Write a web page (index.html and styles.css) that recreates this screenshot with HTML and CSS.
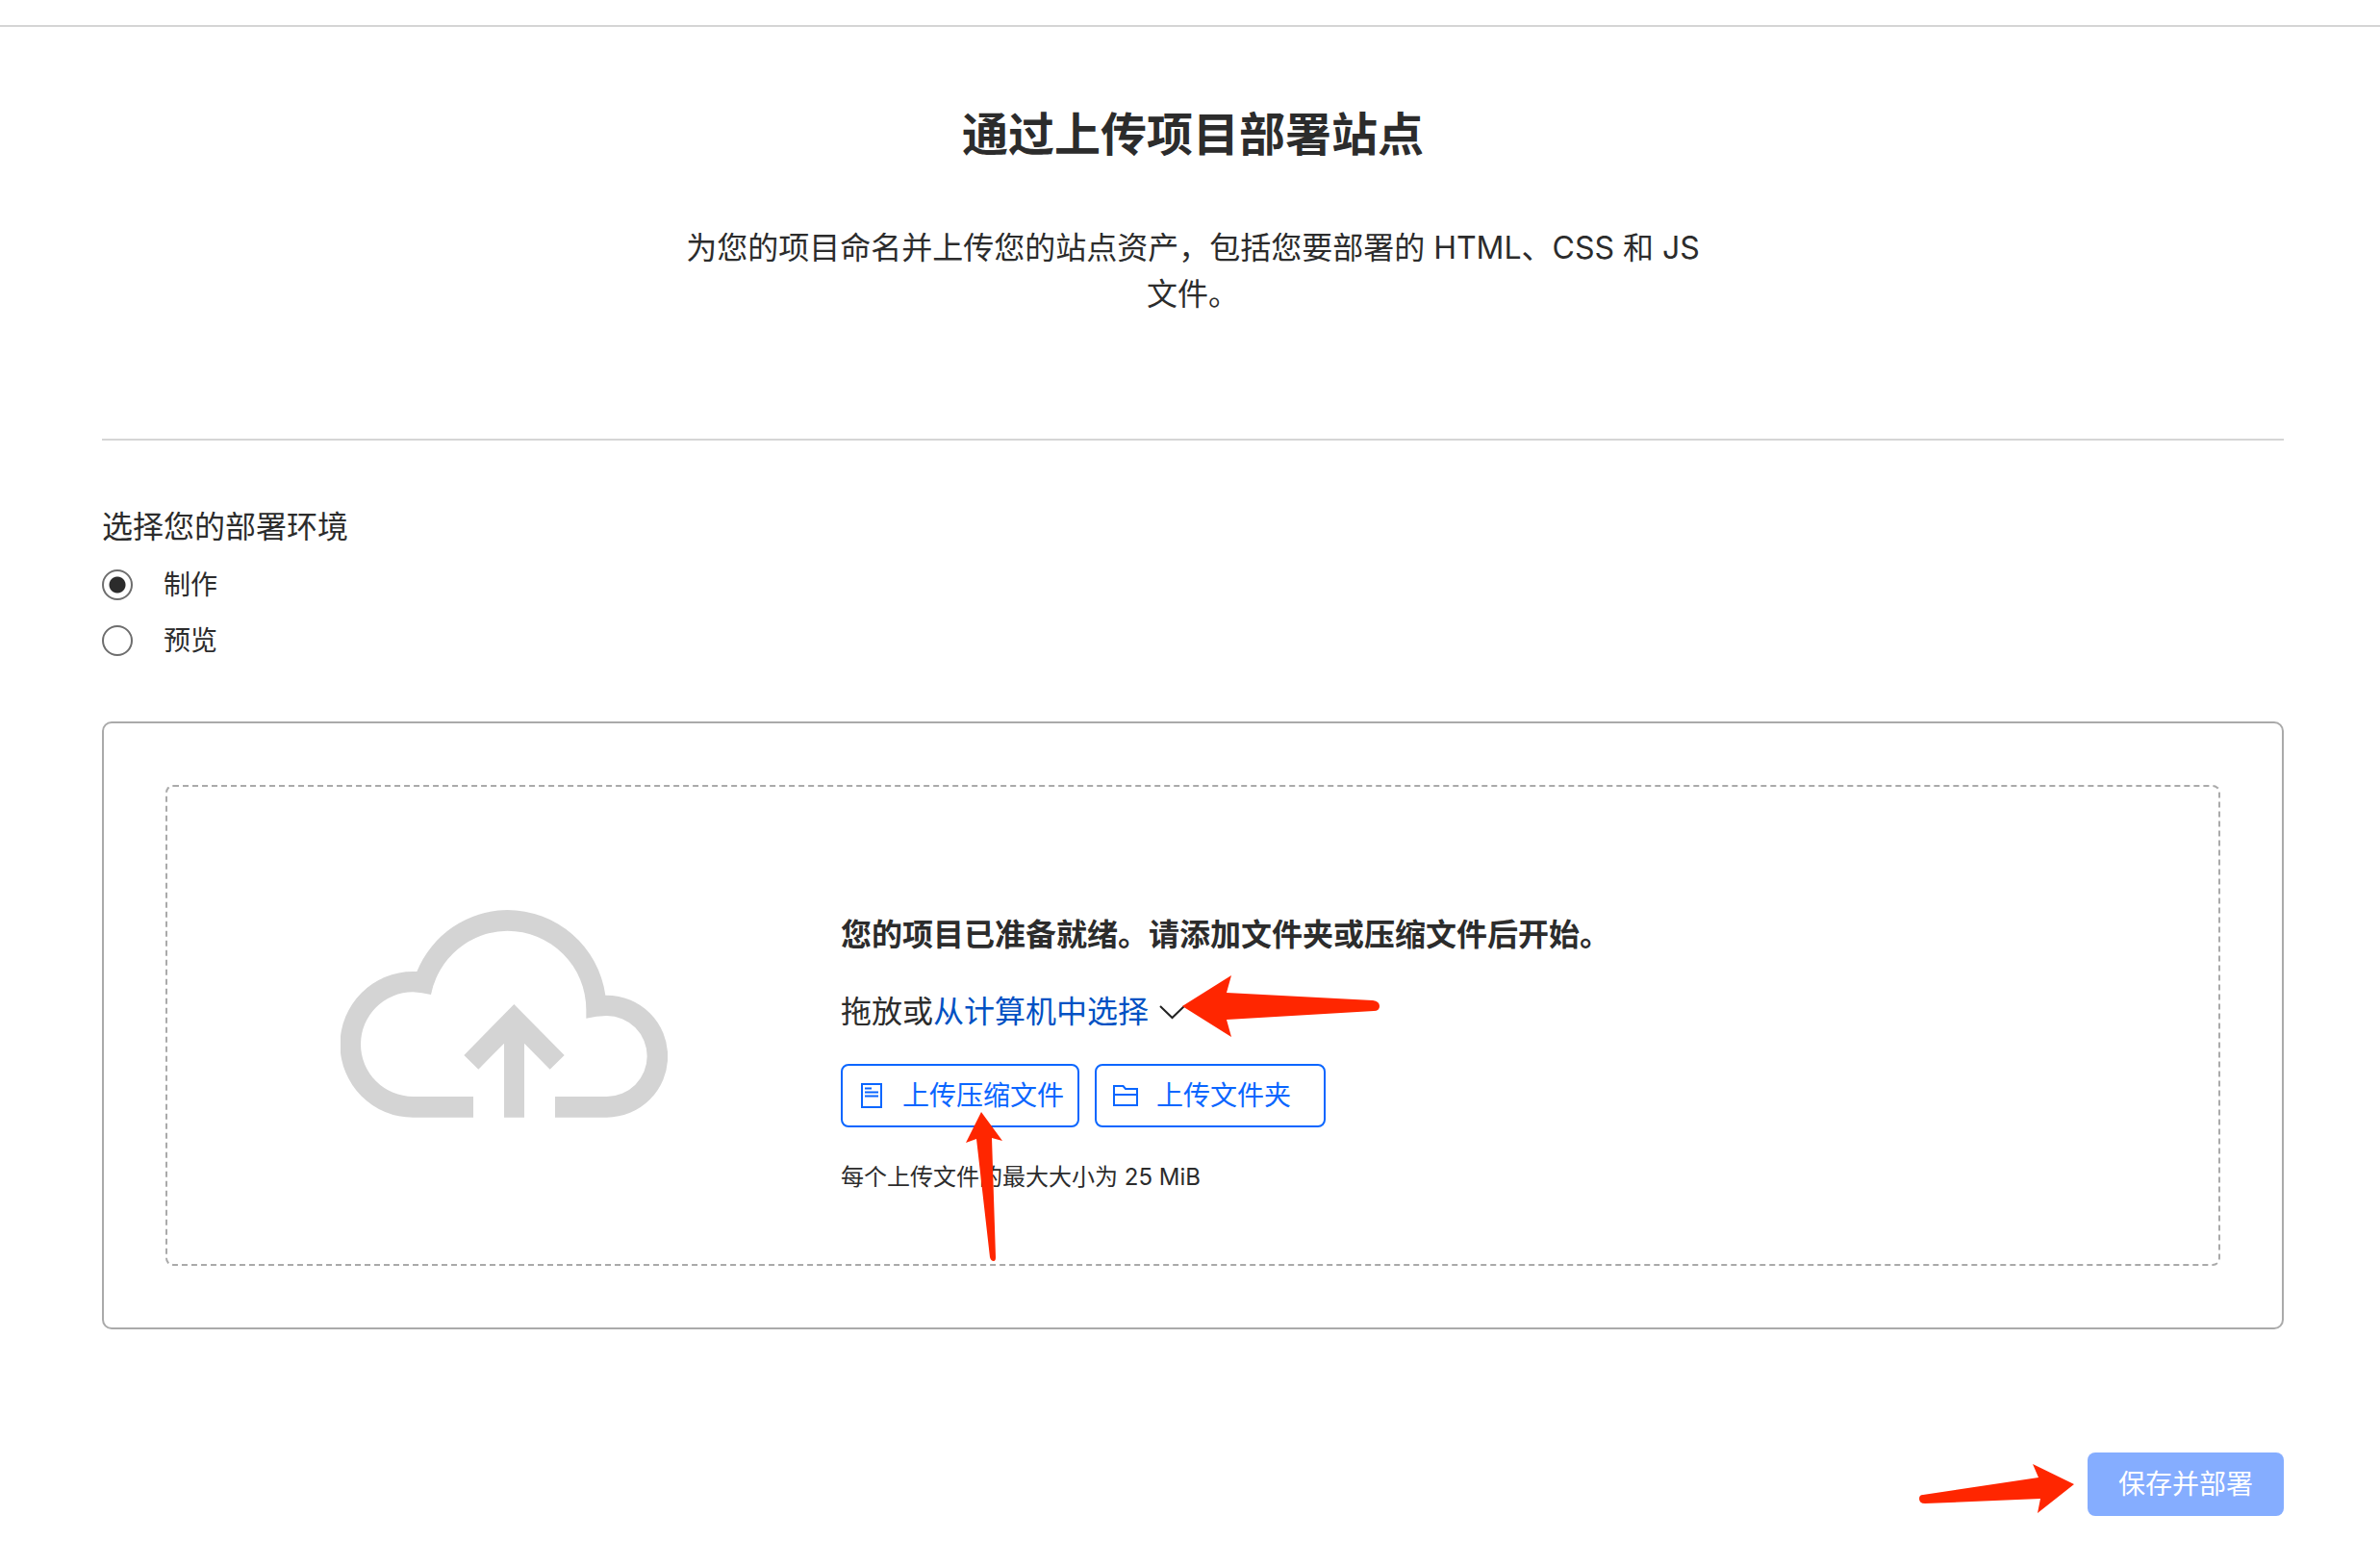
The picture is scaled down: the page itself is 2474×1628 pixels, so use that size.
FILE: index.html
```html
<!DOCTYPE html>
<html lang="zh-CN">
<head>
<meta charset="utf-8">
<title>通过上传项目部署站点</title>
<link rel="stylesheet" href="styles.css">
</head>
<body>
<main class="page">
  <header class="intro">
    <h1 class="intro-title">通过上传项目部署站点</h1>
    <p class="intro-text">为您的项目命名并上传您的站点资产，包括您要部署的 HTML、CSS 和 JS 文件。</p>
  </header>
  <form class="deploy">
    <fieldset class="environment">
      <legend class="environment-title">选择您的部署环境</legend>
      <label class="option"><input class="option-radio" type="radio" name="environment" checked><span>制作</span></label>
      <label class="option"><input class="option-radio" type="radio" name="environment"><span>预览</span></label>
    </fieldset>
    <section class="card">
      <div class="dropzone">
        <div class="dropzone-art">
          <svg class="cloud" viewBox="102 78 1020 648" fill="#d4d4d4" aria-hidden="true">
            <path d="M516 660H328A163 163 0 0 1 328 334Q356 336 384 342A246 246 0 0 1 622 143A246 246 0 0 1 868 389V416Q900 408 932 408A126 126 0 0 1 932 660H771V725H932A190 190 0 0 0 932 344H928A309 309 0 0 0 622 78A308 308 0 0 0 340 270H328A227 227 0 0 0 328 725H516Z"/>
            <path d="M612 725V494L532 575L487 531L643 372L800 531L755 575L675 494V725Z"/>
          </svg>
        </div>
        <div class="dropzone-body">
          <h2 class="dropzone-title">您的项目已准备就绪。请添加文件夹或压缩文件后开始。</h2>
          <div class="pick">
            <span>拖放或</span><button class="pick-button" type="button">从计算机中选择<svg class="chevron" viewBox="0 0 28 16" aria-hidden="true"><path d="M2 2L14.500 14L27 2" fill="none" stroke="#222" stroke-width="2"/></svg></button>
            <svg class="arrow arrow-pick" viewBox="0 0 206 64" aria-hidden="true"><path d="M0 32L51 0L46 18L198 26Q205 27 205 32Q205 37 199 37L46 46L51 64Z"/></svg>
          </div>
          <div class="uploads">
            <button class="upload" type="button">
              <svg class="upload-icon" viewBox="0 0 28 28" fill="none" stroke="currentColor" stroke-width="2" aria-hidden="true"><path d="M4 2H24V26H4ZM7 6.500H14M7 10.500H21M7 14.500H21"/></svg>
              <span>上传压缩文件</span>
              <svg class="arrow arrow-zip" viewBox="0 0 38 156" aria-hidden="true"><path d="M16 0L38 30L27 27L31 151Q31 155 29 155Q26 155 25 151L11 28L0 32Z"/></svg>
            </button>
            <button class="upload" type="button">
              <svg class="upload-icon" viewBox="0 0 28 28" fill="none" stroke="currentColor" stroke-width="2" aria-hidden="true"><path d="M2 24V4H11.500L14 7H26V24ZM2 13H26"/></svg>
              <span>上传文件夹</span>
            </button>
          </div>
          <p class="limit">每个上传文件的最大大小为 25 MiB</p>
        </div>
      </div>
    </section>
    <div class="actions">
      <div class="save-wrap">
        <button class="save" type="submit" disabled>保存并部署</button>
        <svg class="arrow arrow-save" viewBox="0 0 161 51" aria-hidden="true"><path d="M161 21L118 0L124 14L4 32Q0 32 0 36Q0 41 6 41L126 36L123 51Z"/></svg>
      </div>
    </div>
  </form>
</main>
</body>
</html>
```
FILE: styles.css
```css
* {
  box-sizing: border-box;
}

body {
  margin: 0;
  background: #fff;
  color: #2c2c2c;
  font-family: Inter, "Noto Sans CJK SC", sans-serif;
  font-size: 28px;
  line-height: 40px;
}

h1, h2, p {
  margin: 0;
}

button {
  margin: 0;
  font: inherit;
}

.page {
  margin-top: 26px;
  padding: 0 100px 48px 106px;
  border-top: 2px solid #d5d5d5;
}

.intro {
  display: flex;
  flex-direction: column;
  align-items: center;
  gap: 62px;
  padding: 80px 0 126px;
  border-bottom: 2px solid #d5d5d5;
  text-align: center;
}

.intro-title {
  font-size: 48px;
  font-weight: 600;
  line-height: 64px;
}

.intro-text {
  max-width: 1056px;
  font-size: 32px;
  line-height: 48px;
}

.environment {
  display: flex;
  flex-direction: column;
  gap: 18px;
  margin: 0;
  padding: 68px 0 64px;
  border: 0;
}

.environment-title {
  float: left;
  padding: 0;
  font-size: 32px;
  line-height: 44px;
}

.option {
  display: flex;
  align-items: center;
  gap: 32px;
}

.option-radio {
  appearance: none;
  width: 32px;
  height: 32px;
  margin: 0;
  border: 2px solid #6e6e6e;
  border-radius: 50%;
  background: #fff;
}

.option-radio:checked {
  background: radial-gradient(circle, #2c2c2c 8px, #fff 9px);
}

.card {
  padding: 64px;
  border: 2px solid #aaa;
  border-radius: 10px;
}

.dropzone {
  display: grid;
  grid-template-columns: 1fr 2fr;
  padding: 128px 32px 72px 0;
  border: 2px dashed #aaa;
  border-radius: 8px;
}

.dropzone-art {
  display: flex;
  justify-content: center;
}

.cloud {
  width: 340px;
  height: 216px;
}

.dropzone-body {
  padding-top: 2px;
}

.dropzone-title {
  font-size: 32px;
  font-weight: 600;
  line-height: 48px;
}

.pick {
  position: relative;
  display: flex;
  margin-top: 32px;
  font-size: 32px;
  line-height: 48px;
}

.pick-button {
  display: flex;
  align-items: center;
  gap: 10px;
  padding: 0;
  border: 0;
  background: none;
  color: #0051c3;
}

.chevron {
  width: 28px;
  height: 16px;
}

.uploads {
  display: flex;
  gap: 16px;
  margin-top: 30px;
}

.upload {
  position: relative;
  display: flex;
  align-items: center;
  gap: 18px;
  min-width: 240px;
  height: 66px;
  padding: 0 14px 0 16px;
  border: 2px solid #0a66ff;
  border-radius: 8px;
  background: #fff;
  color: #0a66ff;
}

.upload-icon {
  width: 28px;
  height: 28px;
}

.limit {
  margin-top: 34px;
  font-size: 24px;
  line-height: 36px;
}

.actions {
  display: flex;
  justify-content: flex-end;
  padding-top: 128px;
}

.save-wrap {
  position: relative;
}

.save {
  display: block;
  height: 66px;
  padding: 0 32px;
  border: 0;
  border-radius: 8px;
  background: #85adff;
  color: #fff;
}

.arrow {
  position: absolute;
  z-index: 1;
  fill: #ff2600;
  pointer-events: none;
}

.arrow-pick {
  top: -14px;
  left: 355px;
  width: 206px;
  height: 64px;
}

.arrow-zip {
  top: 48px;
  left: 128px;
  width: 38px;
  height: 156px;
}

.arrow-save {
  top: 12px;
  right: 218px;
  width: 161px;
  height: 51px;
}
```
